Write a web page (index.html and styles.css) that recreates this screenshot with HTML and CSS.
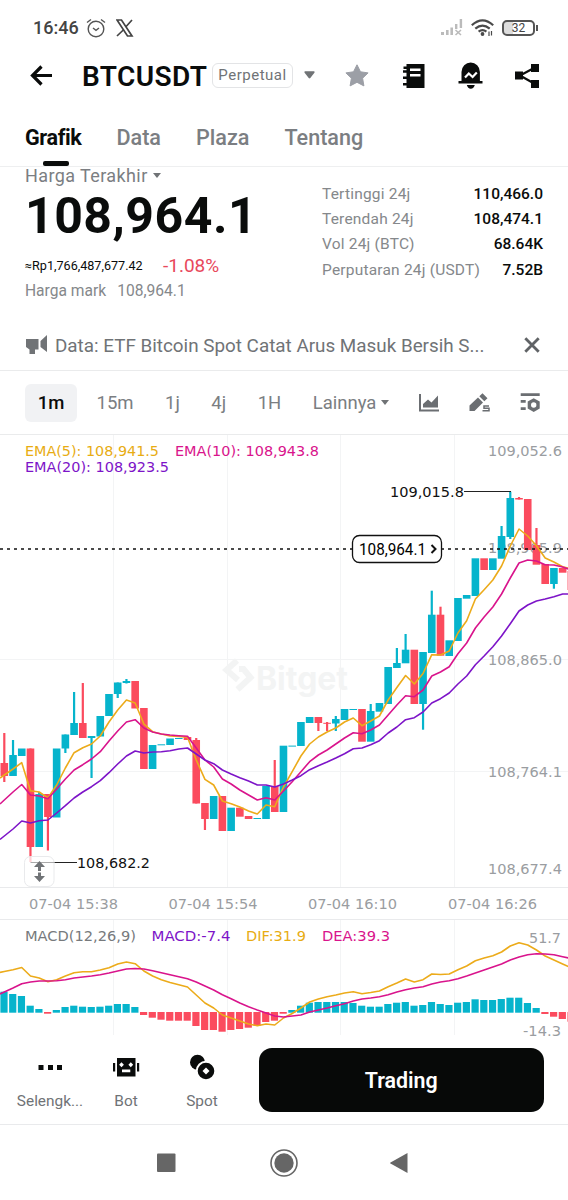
FILE: index.html
```html
<!DOCTYPE html>
<html lang="id">
<head>
  <meta charset="UTF-8">
  <meta name="viewport" content="width=device-width, initial-scale=1.0">
  <title>BTCUSDT Perpetual</title>
  <link rel="stylesheet" href="styles.css">
</head>
<body>
  <!-- Status bar -->
  <div class="status">
    <span class="clock">16:46</span>
    <svg class="alarm" width="20" height="20" viewBox="0 0 20 20" fill="none" stroke="#555" stroke-width="1.4">
      <circle cx="10" cy="11" r="7.8"/>
      <path d="M7 10l3 2.300 3-2.300M1 4.500L5 1.500M19 4.500L15 1.500"/>
    </svg>
    <svg width="18" height="18" viewBox="0 0 18 18" fill="none" stroke="#444">
      <path d="M1 1h4.500l10.500 16h-4.500z" stroke-width="1.700"/>
      <path d="M16 1l-6.300 7M7.800 10.500L1 17" stroke-width="1.700"/>
    </svg>
    <div class="status-right">
      <svg width="22" height="18" viewBox="0 0 22 18" fill="#bbb">
        <path d="M0 13h3v3H0zM5 11h2.600v5H5zM9.400 8.500H12v7.500H9.400zM14 5h2.400v5H14zM18.700 0h2.400v9h-2.400z"/>
        <path d="M14.500 11l5.500 5M20 11l-5.500 5" stroke="#bbb" stroke-width="1.600"/>
      </svg>
      <svg width="23" height="18" viewBox="0 0 23 18" fill="none" stroke="#4a4a4a" stroke-width="2.200">
        <path d="M.8 6.300Q11.500-3.500 22.200 6.300M4.300 9.600Q11.500 3.500 18.700 9.600M7.600 12.700Q11.500 9.700 15.400 12.700"/>
        <circle cx="11.500" cy="15" r="1.900" fill="#4a4a4a" stroke="none"/>
        <path d="M18 12.500v4.500M20.500 12v4.500" stroke-width="1.200"/>
      </svg>
      <div class="battery">32</div>
    </div>
  </div>

  <!-- Header -->
  <header class="header">
    <svg class="back" width="24" height="22" viewBox="0 0 24 22" fill="none" stroke="#0a0c0b" stroke-width="3.200">
      <path d="M23 10.500H3M12.500 1.500l-9 9 9 9"/>
    </svg>
    <h1 class="pair">BTCUSDT</h1>
    <span class="badge">Perpetual</span>
    <svg class="pair-caret" width="11" height="8" viewBox="0 0 11 8" fill="#707376"><path d="M1 .3h9q1 .3.4 1.400L6.300 7q-.8.800-1.600 0L.6 1.700Q0 .6 1 .3z"/></svg>
    <div class="actions">
      <svg width="28" height="28" viewBox="343 62 28 28" fill="#9c9fa6" stroke="#9c9fa6" stroke-linejoin="round">
        <path d="M356 64.800l3.500 7 7.600 1.100-5.500 5.300 1.300 7.700-6.900-3.600-6.900 3.600 1.300-7.700-5.500-5.300 7.600-1.100z"/>
      </svg>
      <svg width="28" height="28" viewBox="399.500 62 28 28">
        <path fill="#0a0c0b" d="M406 64h18v24h-18v-2.500h-3.500V83h3.500v-4h-3.500v-2.500h3.500v-3.700h-3.500v-2.500h3.500V69h-3v-2.500h3z"/>
        <path fill="#fff" d="M409.500 68.500h10.500v2.500h-10.500zM409.500 74h10.500v2.500h-10.500z"/>
      </svg>
      <svg width="28" height="28" viewBox="456.500 62 28 28">
        <path fill="#0a0c0b" d="M461 81v-9a9.200 9.500 0 0 1 18.400 0v9h2.600v2.600h-24V81zM466.300 85h8q-1 3.700-4 3.700t-4-3.700z"/>
        <path fill="none" stroke="#fff" stroke-width="2.200" d="M464.500 77.500l3.800-4 3.800 3.500 4.200-4.500"/>
      </svg>
      <svg width="28" height="28" viewBox="513 62 28 28" fill="#0a0c0b">
        <path d="M515 71.500h8v8h-8zM531 64h8v8h-8zM531 80h8v8h-8z"/>
        <path d="M520 75.500l15-8M520 75.500l15 8.500" stroke="#0a0c0b" stroke-width="2.200"/>
      </svg>
    </div>
  </header>

  <nav class="tabs">
    <a class="tab active">Grafik</a>
    <a class="tab">Data</a>
    <a class="tab">Plaza</a>
    <a class="tab">Tentang</a>
  </nav>

  <!-- Price summary -->
  <section class="ticker">
    <div class="last">
      <div class="last-label">Harga Terakhir <span class="caret"></span></div>
      <div class="last-price">108,964.1</div>
      <div class="last-row"><span class="fiat">≈Rp1,766,487,677.42</span><span class="change">-1.08%</span></div>
      <div class="mark"><span>Harga mark</span><span>108,964.1</span></div>
    </div>
    <dl class="stats">
      <dt>Tertinggi 24j</dt><dd>110,466.0</dd>
      <dt>Terendah 24j</dt><dd>108,474.1</dd>
      <dt>Vol 24j (BTC)</dt><dd>68.64K</dd>
      <dt>Perputaran 24j (USDT)</dt><dd>7.52B</dd>
    </dl>
  </section>

  <div class="news">
    <svg width="22" height="20" viewBox="0 0 22 20" fill="#707376">
      <path d="M0 4h12.500v10.500H9V19H3.500v-4.500L0 12zM14.500 6L21 0v17l-6.500-5z"/>
    </svg>
    <span class="news-text">Data: ETF Bitcoin Spot Catat Arus Masuk Bersih S...</span>
    <svg class="close" width="16" height="16" viewBox="0 0 16 16" stroke="#606366" stroke-width="2.800"><path d="M1.300 1.300l13.400 13.400M14.700 1.300L1.300 14.700"/></svg>
  </div>

  <div class="frames">
    <span class="frame active">1m</span>
    <span class="frame">15m</span>
    <span class="frame">1j</span>
    <span class="frame">4j</span>
    <span class="frame">1H</span>
    <span class="frame more">Lainnya <span class="caret"></span></span>
    <div class="tools">
      <svg width="22" height="20" viewBox="0 0 22 20" fill="#6b6e72">
        <path d="M1 1h2v15.500h18v2H1zM5 14.500V11l5-4.500 3.500 3 6.500-7v12z"/>
      </svg>
      <svg width="22" height="20" viewBox="0 0 22 20" fill="#6b6e72">
        <path d="M.5 18v-5.500l8.500-8 5 5-8.500 8.500zM10.300 3.300L13.500.2l5 5-3.200 3z"/>
        <path d="M20 13h-5v2.200h5v2.600h-6.500" fill="none" stroke="#6b6e72" stroke-width="1.500"/>
      </svg>
      <svg width="22" height="20" viewBox="0 0 22 20" fill="#6b6e72">
        <path d="M.7.3h19V3H.7zM.7 7h5v2.700h-5zM.7 14.300h5V17h-5z"/>
        <path d="M13.700 5.200l6 3.400v6.900l-6 3.400-6-3.400V8.600z"/>
        <circle cx="13.700" cy="12" r="2.700" fill="#fff"/>
      </svg>
    </div>
  </div>

  <!-- Candles, EMA and MACD are drawn by script.js -->
  <svg class="chart" width="568" height="600" viewBox="0 435 568 600">
    <g stroke="#f3f4f5">
      <path d="M113.500 435v452M227.500 435v452M340.500 435v452M454.500 435v452M0 659.500h568M0 771.500h568"/>
      <path d="M113.500 920v115M227.500 920v115M340.500 920v115M454.500 920v115"/>
      <path d="M0 887.500h568M0 919.500h568" stroke="#e9eaec"/>
    </g>

    <g class="watermark">
      <path d="M237 660.500l-10.500 9.500 11.500 10M239 669h4.500l7 8.500-13 12"/>
      <text x="256" y="690" textLength="92" lengthAdjust="spacingAndGlyphs">Bitget</text>
    </g>

    <g class="axis">
      <text x="488" y="456" textLength="74" lengthAdjust="spacingAndGlyphs">109,052.6</text>
      <text x="488" y="553" textLength="74" lengthAdjust="spacingAndGlyphs">108,965.9</text>
      <text x="488" y="665" textLength="74" lengthAdjust="spacingAndGlyphs">108,865.0</text>
      <text x="488" y="777" textLength="74" lengthAdjust="spacingAndGlyphs">108,764.1</text>
      <text x="488" y="874" textLength="74" lengthAdjust="spacingAndGlyphs">108,677.4</text>
      <text x="29" y="909" textLength="89" lengthAdjust="spacingAndGlyphs">07-04 15:38</text>
      <text x="168.500" y="909" textLength="89" lengthAdjust="spacingAndGlyphs">07-04 15:54</text>
      <text x="308" y="909" textLength="89" lengthAdjust="spacingAndGlyphs">07-04 16:10</text>
      <text x="448" y="909" textLength="89" lengthAdjust="spacingAndGlyphs">07-04 16:26</text>
    </g>

    <g id="candles"></g>
    <path d="M0 549h568" stroke="#111" stroke-width="1.700" stroke-dasharray="3 4"/>
    <g id="lines"></g>

    <g class="axis">
      <text x="529" y="942.500" textLength="32" lengthAdjust="spacingAndGlyphs">51.7</text>
      <text x="523" y="1036" textLength="38" lengthAdjust="spacingAndGlyphs">-14.3</text>
    </g>

    <g class="legend">
      <text x="25" y="456" textLength="134" lengthAdjust="spacingAndGlyphs" fill="#e8ac12">EMA(5): 108,941.5</text>
      <text x="175" y="456" textLength="144" lengthAdjust="spacingAndGlyphs" fill="#d9148c">EMA(10): 108,943.8</text>
      <text x="25" y="472" textLength="144" lengthAdjust="spacingAndGlyphs" fill="#7d14c8">EMA(20): 108,923.5</text>
      <text x="25" y="941" textLength="111" lengthAdjust="spacingAndGlyphs" fill="#777a7d">MACD(12,26,9)</text>
      <text x="151.500" y="941" textLength="79" lengthAdjust="spacingAndGlyphs" fill="#7d14c8">MACD:-7.4</text>
      <text x="246" y="941" textLength="60" lengthAdjust="spacingAndGlyphs" fill="#e8ac12">DIF:31.9</text>
      <text x="322" y="941" textLength="68" lengthAdjust="spacingAndGlyphs" fill="#d9148c">DEA:39.3</text>
    </g>

    <g class="extreme">
      <path d="M464 491.500h47" stroke="#222"/>
      <text x="390" y="497" textLength="74" lengthAdjust="spacingAndGlyphs">109,015.8</text>
      <rect x="24.500" y="856.500" width="29.500" height="30" rx="6" fill="#fff" fill-opacity=".75" stroke="#e9eaec"/>
      <path d="M54.500 862.500H77" stroke="#222"/>
      <path d="M30.500 862.500H54" stroke="#aaa"/>
      <text x="77" y="868" textLength="73" lengthAdjust="spacingAndGlyphs">108,682.2</text>
      <path d="M39.500 861l5.500 6h-4v4h-3v-4h-4zM39.500 882l5.500-6h-4v-3.500h-3v3.500h-4z" fill="#707376"/>
    </g>

    <g class="current">
      <rect x="352.500" y="535.500" width="89" height="27" rx="7"/>
      <text x="359" y="554.500" textLength="67" lengthAdjust="spacingAndGlyphs">108,964.1</text>
      <path d="M431.500 545l4 4-4 4"/>
    </g>
  </svg>

  <footer class="bottom">
    <div class="item">
      <svg width="28" height="28" viewBox="0 0 28 28" fill="#0a0c0b"><path d="M2.500 11h5v5h-5zM12 11h5v5h-5zM21 11h5v5h-5z"/></svg>
      <span>Selengk...</span>
    </div>
    <div class="item">
      <svg width="28" height="28" viewBox="0 0 28 28">
        <path fill="#0a0c0b" d="M5 4h18.500v18.500H5zM1 9h2.200v8.500H1zM25 9h2.200v8.500H25z"/>
        <path fill="#fff" d="M9.500 8.200l2.400 2.500-2.400 2.500-2.400-2.500zM18.800 8.200l2.400 2.500-2.400 2.500-2.400-2.500zM10 15.500h8.300v2.800H10z"/>
      </svg>
      <span>Bot</span>
    </div>
    <div class="item">
      <svg width="28" height="28" viewBox="0 0 28 28">
        <circle cx="9.500" cy="8.300" r="7.500" fill="#0a0c0b"/>
        <circle cx="18" cy="17" r="9.300" fill="#0a0c0b" stroke="#fff" stroke-width="2"/>
        <path fill="#fff" d="M18 13.500l3.500 3.500-3.500 3.500-3.500-3.500z"/>
      </svg>
      <span>Spot</span>
    </div>
    <button class="trade">Trading</button>
  </footer>

  <div class="sysnav">
    <svg width="20" height="20" viewBox="0 0 20 20" fill="#666"><rect x="1" y=".5" width="18.500" height="18.500" rx="1"/></svg>
    <svg width="28" height="28" viewBox="0 0 28 28" fill="#666"><circle cx="14" cy="14" r="9.700"/><circle cx="14" cy="14" r="13" fill="none" stroke="#666" stroke-width="1.600"/></svg>
    <svg class="nav-back" width="20" height="22" viewBox="0 0 20 22" fill="#666"><path d="M18.500 1v20L1.500 11.600q-1-.6 0-1.200z"/></svg>
  </div>

  <script src="script.js"></script>
</body>
</html>
```

FILE: styles.css
```css
* {
  box-sizing: border-box;
}

body {
  margin: 0;
  width: 568px;
  height: 1200px;
  overflow: hidden;
  background: #fff;
  color: #0a0c0b;
  font-family: Roboto, sans-serif;
}

svg {
  display: block;
  flex-shrink: 0;
}

/* status bar */
.status {
  display: flex;
  align-items: center;
  height: 55px;
  padding: 0 33px 0 33px;
}

.clock {
  width: 53px;
  color: #444;
  font-size: 18px;
  font-weight: 500;
}

.alarm {
  margin-right: 10px;
}

.status-right {
  display: flex;
  align-items: center;
  gap: 8px;
  margin-left: auto;
}

.battery {
  position: relative;
  width: 33px;
  height: 16px;
  border: 2px solid #555;
  border-radius: 5px;
  background: linear-gradient(90deg, #ddd 9px, #fff 9px);
  color: #444;
  font-size: 12px;
  line-height: 13px;
  text-align: center;
}

.battery::after {
  content: "";
  position: absolute;
  right: -5px;
  top: 3px;
  width: 2px;
  height: 6px;
  background: #555;
}

/* header */
.header {
  display: flex;
  align-items: center;
  height: 42px;
  padding: 0 27px 0 29px;
}

.pair {
  width: 130px;
  margin: 0 0 0 29px;
  font-size: 28px;
  font-weight: 600;
  letter-spacing: 0.4px;
}

.badge {
  width: 81px;
  height: 25px;
  margin-top: -2px;
  border: 1.500px solid #e3e4e6;
  border-radius: 6px;
  color: #707376;
  font-size: 15px;
  line-height: 23px;
  letter-spacing: 0.5px;
  text-align: center;
}

.pair-caret {
  margin: -2px 0 0 11px;
}

.actions {
  display: flex;
  gap: 28.500px;
  margin-left: auto;
}

.tabs {
  display: flex;
  gap: 35px;
  height: 70px;
  padding: 0 25px;
  border-bottom: 1px solid #eeeff0;
}

.tab {
  position: relative;
  color: #7b7e82;
  font-size: 21.600px;
  font-weight: 500;
  line-height: 82px;
}

.tab.active {
  color: #0a0c0b;
  font-weight: 700;
  letter-spacing: -0.400px;
}

.tab.active::after {
  content: "";
  position: absolute;
  left: 18px;
  bottom: 0;
  width: 26px;
  height: 5px;
  border-radius: 2px;
  background: #0a0c0b;
}

/* price summary */
.ticker {
  display: flex;
  justify-content: space-between;
  height: 153px;
  padding: 0 25px;
}

.last-label {
  height: 19px;
  color: #7b7e82;
  font-size: 18px;
  line-height: 17px;
  letter-spacing: 0.4px;
}

.caret {
  display: inline-block;
  vertical-align: 4px;
  border: 4.500px solid transparent;
  border-top: 5px solid #707376;
  border-bottom: 0;
}

.last-price {
  height: 66px;
  font-size: 50px;
  font-weight: 700;
  line-height: 61px;
  letter-spacing: 0.5px;
}

.last-row {
  display: flex;
  align-items: center;
  height: 26px;
}

.fiat {
  width: 138px;
  font-size: 12.600px;
  white-space: nowrap;
}

.change {
  color: #e8495c;
  font-size: 19px;
}

.mark {
  display: flex;
  gap: 11px;
  color: #85888b;
  font-size: 15.600px;
  line-height: 27px;
}

.stats {
  display: grid;
  grid-template-columns: 151px 70px;
  grid-auto-rows: 25.200px;
  margin: 14px 0 0;
  font-size: 15.500px;
  line-height: 26px;
  white-space: nowrap;
}

.stats dt {
  color: #85888b;
  letter-spacing: 0.200px;
}

.stats dd {
  margin: 0;
  font-weight: 500;
  text-align: right;
}

.news {
  display: flex;
  align-items: center;
  height: 51px;
  padding: 0 28px 0 26px;
  border-bottom: 1px solid #eaebec;
  color: #707376;
}

.news-text {
  margin-left: 7px;
  padding-top: 1px;
  font-size: 18.850px;
  white-space: nowrap;
}

.close {
  margin-left: auto;
}

/* timeframes */
.frames {
  display: flex;
  align-items: center;
  gap: 31.500px;
  height: 64px;
  padding: 0 26px 0 25px;
  border-bottom: 1px solid #eaebec;
  color: #7b7e82;
  font-size: 18.500px;
  white-space: nowrap;
}

.frame.active {
  flex-shrink: 0;
  width: 52px;
  height: 38px;
  margin-right: -12px;
  border-radius: 6px;
  background: #f1f2f4;
  color: #0a0c0b;
  font-weight: 500;
  line-height: 38px;
  text-align: center;
}

.tools {
  display: flex;
  gap: 29px;
  margin-left: auto;
}

.frames .more {
  margin-right: -10px;
}

/* chart */
.chart {
  overflow: visible;
}

.chart text {
  font-family: "DejaVu Sans", sans-serif;
  font-size: 14px;
}

.chart .axis text {
  fill: #9a9da1;
}

.chart .extreme text {
  fill: #111;
}

.watermark {
  fill: #f3f4f4;
}

.watermark path {
  fill: none;
  stroke: #f3f4f4;
  stroke-width: 6;
}

.chart .watermark text {
  font-family: Inter, sans-serif;
  font-size: 32px;
  font-weight: 700;
}

.current rect {
  fill: #fff;
  stroke: #111;
  stroke-width: 1.300;
}

.current path {
  fill: none;
  stroke: #111;
  stroke-width: 2;
}

.chart .current text {
  font-family: Roboto, sans-serif;
  font-size: 16px;
}

.up {
  fill: #06b4cc;
}

.down {
  fill: #fb4b5e;
}

.line {
  fill: none;
  stroke-width: 1.600;
  stroke-linejoin: round;
}

.fast {
  stroke: #ecab1a;
}

.mid {
  stroke: #d9148c;
}

.slow {
  stroke: #7d14c8;
}

/* bottom bar */
.bottom {
  display: flex;
  height: 90px;
  padding: 13px 24px 0 12px;
  border-bottom: 1px solid #e9eaec;
}

.item {
  display: flex;
  flex-direction: column;
  align-items: center;
  width: 76px;
  padding-top: 6px;
  color: #707376;
  font-size: 15.400px;
  line-height: 38px;
}

.trade {
  flex: 1;
  height: 64px;
  margin-left: 18.500px;
  border: 0;
  border-radius: 13px;
  background: #070908;
  color: #fff;
  font-family: inherit;
  font-size: 21.400px;
  font-weight: 600;
}

.sysnav {
  display: flex;
  align-items: center;
  justify-content: center;
  gap: 94px;
  height: 75px;
  padding-right: 3px;
}

.nav-back {
  margin-left: -3px;
}
```

FILE: script.js
```js
const NS = 'http://www.w3.org/2000/svg';
const STEP = 8.724;
const START = 4.3;

// [up, body top, body bottom, wick top, wick bottom]
const candles = [
  [0,763,776,733,782],[1,755,776,740,776],[1,748.5,756],[0,748.5,847,748.5,862],[1,794,847,792,847],
  [0,794,817,794,850.5],[1,748.5,817.5],[1,734.5,748.5,734.5,753],[1,723,735,692,735],[0,723,738,683,738],
  [1,736,738,736,778],[1,716,736.5],[1,694,716],[1,682.5,694,682.5,698],[1,681,683,679,683.5],
  [0,681,708.5],[0,708,769],[1,745,769],[1,744.3,745.3],[1,738.5,745],
  [1,738,739],[0,737,740],[0,740,803.5,738,803.5],[0,803,819,803,830],[1,796,819],
  [0,796,831],[1,807.7,831],[0,807.7,816.7],[0,816,819],[1,818,819],
  [1,786,819],[0,786,812,760,812],[1,745.7,812],[1,745.6,746.6],[1,722,746],
  [1,717,723],[0,717,723,717,731],[0,722.8,723.8,722,731],[1,719,723.5,716,731],[1,709,720],
  [1,709,710],[0,709,741.7],[1,711,741.7,704,741],[1,703,711.7],[1,667,704],
  [1,663,668,648,668],[1,649.7,663.3,634,663],[0,649.7,704],[1,652,704,652,729.7],[1,614.7,653,590.7,653],
  [0,614.7,655.7,606.7,655],[1,640.3,656],[1,598,641],[1,595,598.7],[1,558.3,596],
  [0,558.3,570],[1,558.3,570],[1,536,558.7,526,558],[1,498,537,491.7,539],[0,498,499.5,497,499.5],
  [0,499,550],[0,545,564.7,528,564],[0,564,584],[1,568,584,568,588.7],[0,568,572.7],
  [0,571,590]
];

const ema5 = [775,769,762.7,790.7,792,798,785,768,752.7,747.7,744,736,722,710,700,703,724,731.7,734,736,736.5,737.3,760,779.3,785,801,803.7,807,811,814,805,806.7,787,771.7,756,744,737,732,728,722,718,725.7,721,716,700,687.5,675.5,684,673.5,654.7,655,651,633,620.7,599,589.7,580,566,546,529,536,545.7,558,562,566.7,569];
const ema10 = [800,792,784.5,795,796,798.7,789,779,770,764.7,759,751.7,741,731,722,719.7,728,732,734,735,735.7,736.3,748,760,767,779,784,790,795,800,797.7,800,791,781.7,771.7,761.7,755,750,744,738,732.7,733.7,730,725,715,705,695.7,696.7,690,676,672,666.7,653.7,643,628,617,607,594,578,563,560,561,564.7,565,567,570];
const ema20 = [836,829,821,823,820.7,820,813,805.7,798,792,786.7,780.7,772.7,764,756,751,753,752,751.7,750.7,749,748,754,760,763.7,770,774,777.7,781,785,785,787,784,780,775.7,769.7,765.7,762,758,753.7,748.7,748,744.7,740.7,733,727,719.7,717.7,712,703,698.7,693,684,676,664.7,656,646.7,636,623.7,611,605,601,599,596.7,594,594];

const macd = [991.7,994,996,1005.7,1009,1013.7,1010,1007,1005.7,1006.7,1007,1006.7,1005.7,1004,1004,1007,1015,1017.7,1019.7,1020.7,1020.7,1020.7,1026,1030,1030,1031.7,1030,1029,1027.7,1025.7,1022,1020.7,1013.7,1010,1005.7,1002.7,1002,1002,1002,1002,1003,1005.7,1006.7,1006.7,1004,1002.7,1002,1005.7,1005,1002,1004,1005,1002.7,1002,999.3,1000,1000,999,997.7,997.7,1003,1008,1014,1016.7,1019,1021.7];
const dif = [971.5,969.7,967.5,976,978,981.7,979.7,976,972.7,971.7,971.7,970,967.7,964,962,963.7,971,976,979.7,982.5,984.7,987,995,1003,1008,1015,1018,1021,1024,1025.7,1024,1025,1018,1013.5,1008,1002,999,996.7,995,993,991.7,993.7,992.5,991,986.7,983,979,982,979.7,974,974.5,974,969.7,966,960.7,958,955.7,952,946,942.7,945,950,956,960,964,968];
const dea = [992,988,983.7,982,981,981,980.7,979.7,978,977,976,974.7,973,971,969,968.5,969,970.7,972.7,974.7,976.7,978.7,982,986,990,994.7,998.7,1003,1006.7,1010,1013,1016,1017,1016,1015,1012,1010,1008,1005.7,1003.7,1001,999,998,996.7,994.7,992,989.7,988,986.7,984,982,980.7,978.7,976,973,970,967,964,960,957,954.7,953.7,954,954.7,956.7,958.7];

const bars = document.getElementById('candles');
const lines = document.getElementById('lines');

function rect(x, top, bottom, width, cls) {
  const el = document.createElementNS(NS, 'rect');
  el.setAttribute('x', x - width / 2);
  el.setAttribute('y', top);
  el.setAttribute('width', width);
  el.setAttribute('height', bottom - top);
  el.setAttribute('class', cls);
  bars.appendChild(el);
}

// extend the first segment to the left edge of the chart
function line(values, cls) {
  const first = values[0] - (values[1] - values[0]) * 0.5;
  const points = ['0,' + first];
  values.forEach((y, i) => points.push((START + i * STEP) + ',' + y));
  const el = document.createElementNS(NS, 'polyline');
  el.setAttribute('points', points.join(' '));
  el.setAttribute('class', 'line ' + cls);
  lines.appendChild(el);
}

candles.forEach(([up, top, bottom, high, low], i) => {
  const x = START + i * STEP;
  const cls = up ? 'up' : 'down';
  rect(x, top, bottom, 7.6, cls);
  if (high) rect(x, high, low, 2.2, cls);
});

macd.forEach((y, i) => {
  const x = START + i * STEP - 0.3;
  if (y < 1012.5) rect(x, y, 1012.7, 7.2, 'up');
  else rect(x, 1012, y, 7.2, 'down');
});

line(ema5, 'fast');
line(ema10, 'mid');
line(ema20, 'slow');
line(dif, 'fast');
line(dea, 'mid');
```
